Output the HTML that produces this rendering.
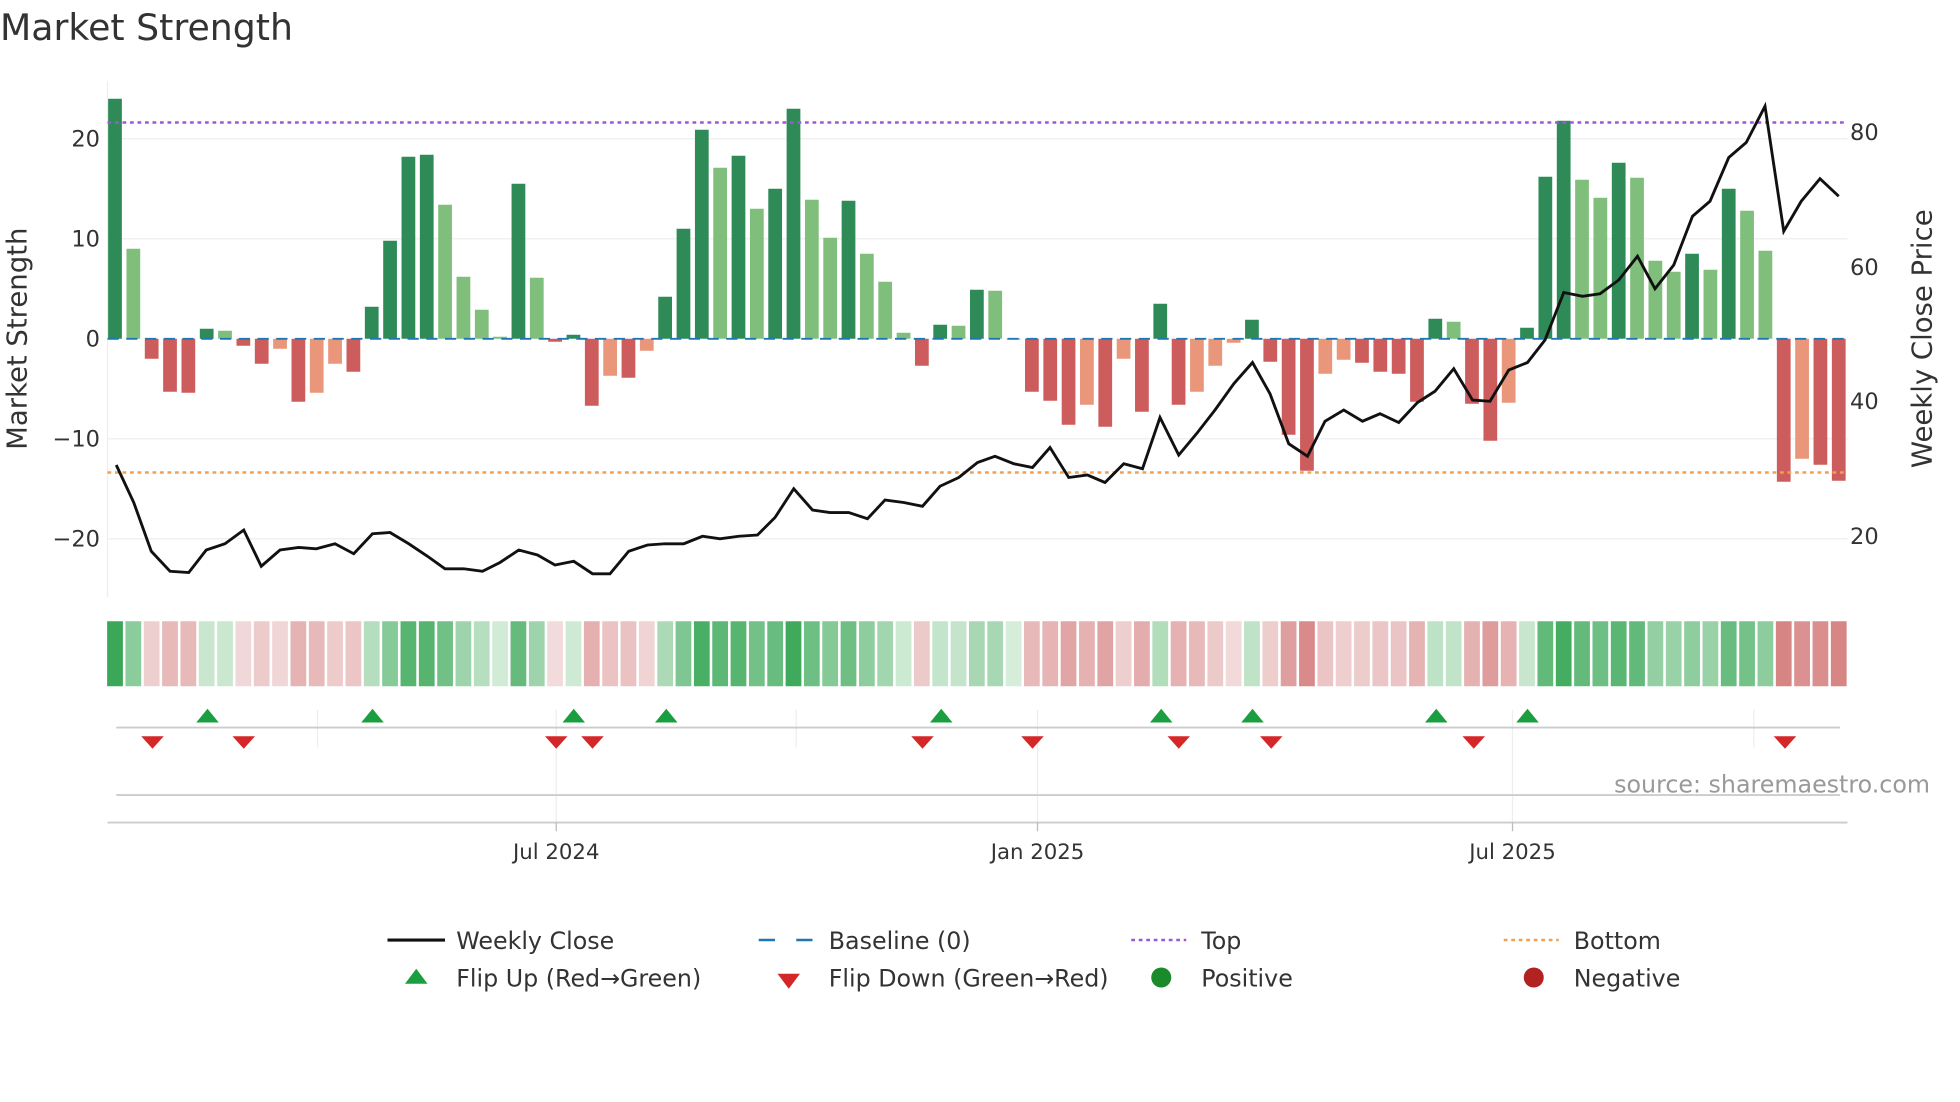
<!DOCTYPE html>
<html><head><meta charset="utf-8"><style>
html,body{margin:0;padding:0;background:#fff;width:1960px;height:1102px;overflow:hidden}
svg{display:block}
text{font-family:"DejaVu Sans","Liberation Sans",sans-serif}
</style></head><body>
<svg id="s" width="1960" height="1102" viewBox="0 0 1568 881.6" preserveAspectRatio="none" xmlns="http://www.w3.org/2000/svg">
<text x="0" y="32" font-size="29" fill="#333">Market Strength</text>
<g stroke="#eeeeee" stroke-width="1">
<line x1="86" x2="1478" y1="111" y2="111"/><line x1="86" x2="1478" y1="191" y2="191"/>
<line x1="86" x2="1478" y1="351" y2="351"/><line x1="86" x2="1478" y1="431" y2="431"/>
<line x1="86" x2="86" y1="65" y2="478"/>
</g>
<g font-size="18" fill="#333" text-anchor="end">
<text x="80" y="117">20</text><text x="80" y="197">10</text><text x="80" y="277">0</text><text x="80" y="357">−10</text><text x="80" y="437">−20</text>
</g>
<g font-size="18" fill="#333">
<text x="1480" y="112">80</text><text x="1480" y="220">60</text><text x="1480" y="327">40</text><text x="1480" y="435">20</text>
</g>
<text transform="translate(21,271) rotate(-90)" font-size="22" fill="#333" text-anchor="middle">Market Strength</text>
<text transform="translate(1545,271) rotate(-90)" font-size="22" fill="#333" text-anchor="middle">Weekly Close Price</text>
<g id="bars"></g>
<line x1="86" x2="1478" y1="271" y2="271" stroke="#1f77b4" stroke-width="1.5" stroke-dasharray="9,6"/>
<line x1="86" x2="1478" y1="98" y2="98" stroke="#9b59d6" stroke-width="2" stroke-dasharray="3,3"/>
<line x1="86" x2="1478" y1="378" y2="378" stroke="#f0a050" stroke-width="2" stroke-dasharray="3,3"/>
<polyline id="price" fill="none" stroke="#111" stroke-width="2.3"/>
<g id="heat"></g>
<g stroke="#eee" stroke-width="1">
<line x1="254" x2="254" y1="568" y2="598"/><line x1="445" x2="445" y1="568" y2="660"/><line x1="637" x2="637" y1="568" y2="598"/><line x1="830" x2="830" y1="568" y2="660"/><line x1="1210" x2="1210" y1="568" y2="660"/><line x1="1403" x2="1403" y1="568" y2="598"/>
</g>
<line x1="93" x2="1472" y1="582" y2="582" stroke="#ccc" stroke-width="1.5"/>
<line x1="93" x2="1472" y1="636" y2="636" stroke="#ccc" stroke-width="1.5"/>
<line x1="86" x2="1478" y1="658" y2="658" stroke="#ccc" stroke-width="1.5"/>
<g stroke="#bbb"><line x1="445" x2="445" y1="658" y2="665"/><line x1="830" x2="830" y1="658" y2="665"/><line x1="1210" x2="1210" y1="658" y2="665"/></g>
<g id="marks"></g>
<text x="1544" y="634" font-size="19" fill="#999" text-anchor="end">source: sharemaestro.com</text>
<g font-size="17" fill="#333" text-anchor="middle">
<text x="445" y="687">Jul 2024</text><text x="830" y="687">Jan 2025</text><text x="1210" y="687">Jul 2025</text>
</g>
<g font-size="19" fill="#333">
<line x1="310" x2="356" y1="752" y2="752" stroke="#111" stroke-width="2.5"/><text x="365" y="759">Weekly Close</text>
<line x1="607" x2="651" y1="752" y2="752" stroke="#1f77b4" stroke-width="2" stroke-dasharray="13,17"/><text x="663" y="759">Baseline (0)</text>
<line x1="905" x2="949" y1="752" y2="752" stroke="#9b59d6" stroke-width="2" stroke-dasharray="3,3"/><text x="961" y="759">Top</text>
<line x1="1203" x2="1247" y1="752" y2="752" stroke="#f0a050" stroke-width="2" stroke-dasharray="3,3"/><text x="1259" y="759">Bottom</text>
<path d="M324 787 L333 775 L342 787Z" fill="#1a9e3f"/><text x="365" y="789">Flip Up (Red→Green)</text>
<path d="M622 779 L640 779 L631 791Z" fill="#d62728"/><text x="663" y="789">Flip Down (Green→Red)</text>
<circle cx="929" cy="782" r="8" fill="#1a8a2a"/><text x="961" y="789">Positive</text>
<circle cx="1227" cy="782" r="8" fill="#b22222"/><text x="1259" y="789">Negative</text>
</g>
</svg>
<script>
var NS="http://www.w3.org/2000/svg";
var v=[24,9,-2,-5.3,-5.4,1,0.8,-0.7,-2.5,-1,-6.3,-5.4,-2.5,-3.3,3.2,9.8,18.2,18.4,13.4,6.2,2.9,0.2,15.5,6.1,-0.3,0.4,-6.7,-3.7,-3.9,-1.2,4.2,11,20.9,17.1,18.3,13,15,23,13.9,10.1,13.8,8.5,5.7,0.6,-2.7,1.4,1.3,4.9,4.8,0,-5.3,-6.2,-8.6,-6.6,-8.8,-2,-7.3,3.5,-6.6,-5.3,-2.7,-0.4,1.9,-2.3,-9.6,-13.2,-3.5,-2.1,-2.4,-3.3,-3.5,-6.3,2,1.7,-6.5,-10.2,-6.4,1.1,16.2,21.8,15.9,14.1,17.6,16.1,7.8,6.7,8.5,6.9,15,12.8,8.8,-14.3,-12,-12.6,-14.2];
var light={1:1,6:1,18:1,19:1,20:1,21:1,23:1,33:1,35:1,38:1,39:1,41:1,42:1,43:1,46:1,48:1,73:1,80:1,81:1,83:1,84:1,85:1,87:1,89:1,90:1};
var salmon={9:1,11:1,12:1,27:1,29:1,53:1,55:1,59:1,60:1,61:1,66:1,67:1,76:1,92:1};
function el(t,a,p){var e=document.createElementNS(NS,t);for(var k in a)e.setAttribute(k,a[k]);p.appendChild(e);return e;}
var B=document.getElementById("bars"),H=document.getElementById("heat"),M=document.getElementById("marks");
function mix(a,b,t){var r="#";for(var i=0;i<3;i++){var x=Math.round(a[i]+(b[i]-a[i])*t);r+=("0"+x.toString(16)).slice(-2);}return r;}
var N=v.length,sp=(1471-92)/(N-1);
for(var i=0;i<N;i++){
 var x=92+sp*i,val=v[i],c;
 if(val>=0)c=light[i]?"#7fbf7b":"#2e8b57";else c=salmon[i]?"#e9967a":"#cd5c5c";
 var y0=271,y1=271-val*8;
 el("rect",{x:x-5.5,y:Math.min(y0,y1),width:11,height:Math.max(0.5,Math.abs(y1-y0)),fill:c},B);
 var hc;
 if(val>=0){hc=mix([214,237,218],[58,168,88],Math.min(1,Math.pow(val/24,0.75)));}
 else{hc=mix([243,222,222],[214,128,128],Math.min(1,Math.pow(-val/15,0.9)));}
 el("rect",{x:x-6.3,y:497,width:12.6,height:52,fill:hc},H);
}
var pts=[[93,372],[107,402],[121,441],[136,457],[151,458],[165,440],[180,435],[195,424],[209,453],[224,440],[239,438],[253,439],[268,435],[283,443],[298,427],[312,426],[327,435],[342,445],[356,455],[371,455],[386,457],[400,450],[415,440],[430,444],[444,452],[459,449],[474,459],[488,459],[503,441],[518,436],[532,435],[547,435],[562,429],[576,431],[591,429],[606,428],[620,414],[635,391],[650,408],[664,410],[679,410],[694,415],[708,400],[723,402],[738,405],[752,389],[767,382],[782,370],[796,365],[811,371],[826,374],[840,358],[855,382],[870,380],[884,386],[899,371],[914,375],[928,334],[943,364],[958,346],[972,328],[987,307],[1002,290],[1016,315],[1031,355],[1046,365],[1060,337],[1075,328],[1090,337],[1104,331],[1119,338],[1134,322],[1148,313],[1163,295],[1178,320],[1192,321],[1207,296],[1222,290],[1236,272],[1251,234],[1266,237],[1280,235],[1295,224],[1310,205],[1324,231],[1339,212],[1354,173],[1368,161],[1383,126],[1397,114],[1412,85],[1427,185],[1441,161],[1456,143],[1471,157]];
document.getElementById("price").setAttribute("points",pts.map(function(p){return p.join(",")}).join(" "));
[166,298,459,533,753,929,1002,1149,1222].forEach(function(x){el("path",{d:"M"+(x-9)+" 578 L"+x+" 567 L"+(x+9)+" 578Z",fill:"#1a9e3f"},M);});
[122,195,445,474,738,826,943,1017,1179,1428].forEach(function(x){el("path",{d:"M"+(x-9)+" 589 L"+(x+9)+" 589 L"+x+" 599Z",fill:"#d62728"},M);});
</script>
</body></html>
